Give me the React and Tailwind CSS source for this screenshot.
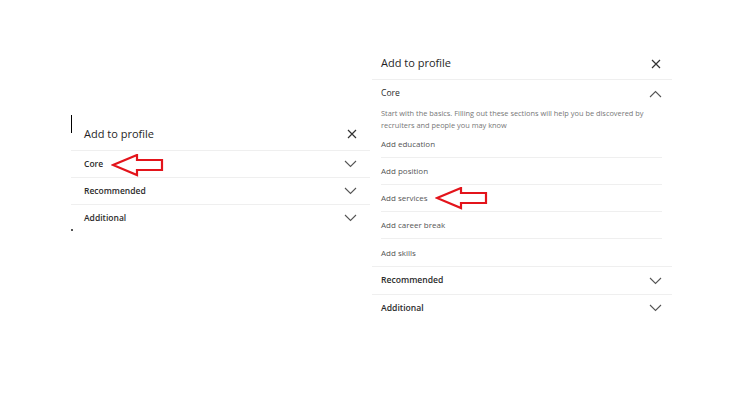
import React from 'react';

const FONT = { fontFamily: '"Open Sans", "Liberation Sans", sans-serif' };

const Chevron = ({ up = false }) => (
  <svg width="13" height="8" viewBox="0 0 13 8" className="shrink-0">
    <polyline
      points={up ? '1,7 6.5,1.5 12,7' : '1,1 6.5,6.5 12,1'}
      fill="none"
      stroke="#555"
      strokeWidth="1.1"
    />
  </svg>
);

const Close = () => (
  <svg width="10" height="10" viewBox="0 0 10 10" className="shrink-0">
    <path d="M1 1 L9 9 M9 1 L1 9" stroke="#333" strokeWidth="1.2" fill="none" />
  </svg>
);

const Arrow = ({ className }) => (
  <svg width="54" height="24" viewBox="0 0 54 24" className={className}>
    <polygon
      points="2,11 26,1 26,6 51,6 51,16 26,16 26,21"
      fill="none"
      stroke="#e3141b"
      strokeWidth="2.2"
      strokeLinejoin="miter"
    />
  </svg>
);

const SectionRow = ({ label, pad }) => (
  <div className={`h-[27px] flex items-center justify-between border-t border-[#efefef] ${pad}`}>
    <span className="text-[8.5px] font-semibold text-[#2b2b2b]">{label}</span>
    <Chevron />
  </div>
);

const items = ['Add education', 'Add position', 'Add services', 'Add career break', 'Add skills'];

export default function App() {
  return (
    <div className="relative w-[744px] h-[396px] bg-white flex items-start overflow-hidden" style={FONT}>
      {/* collapsed panel */}
      <div className="relative ml-[71px] mt-[115px] w-[299px]">
        <div className="absolute left-0 top-0 w-px h-[18px] bg-black" />
        <div className="h-[35px] flex items-center justify-between pl-[13px] pr-[13px] pt-[3px]">
          <span className="text-[11px] font-medium text-[#1f1f1f]">Add to profile</span>
          <Close />
        </div>
        <SectionRow label="Core" pad="pl-[13px] pr-[13px]" />
        <SectionRow label="Recommended" pad="pl-[13px] pr-[13px]" />
        <SectionRow label="Additional" pad="pl-[13px] pr-[13px]" />
        <div className="w-[2px] h-[2px] bg-[#555] mt-[-2px]" />
      </div>

      {/* expanded panel */}
      <div className="ml-[2px] mt-[46px] w-[300px]">
        <div className="h-[34px] flex items-center justify-between pl-[9px] pr-[11px] pt-[2px] border-b border-[#efefef]">
          <span className="text-[11px] font-medium text-[#1f1f1f]">Add to profile</span>
          <Close />
        </div>
        <div className="h-[27px] flex items-center justify-between pl-[9px] pr-[10px]">
          <span className="text-[8.6px] font-medium text-[#2b2b2b]">Core</span>
          <Chevron up />
        </div>
        <p className="pl-[9px] pr-[10px] text-[7.4px] leading-[12px] text-[#777]">
          Start with the basics. Filling out these sections will help you be discovered by
          <br />
          recruiters and people you may know
        </p>
        <div className="pl-[9px] pr-[10px]">
          {items.map((item, i) => (
            <div
              key={item}
              className={`h-[27px] flex items-center text-[8px] text-[#555] ${i < items.length - 1 ? 'border-b border-[#efefef]' : ''}`}
            >
              {item}
            </div>
          ))}
        </div>
        <div className="h-[28px] flex items-center justify-between pl-[9px] pr-[10px] border-t border-[#efefef]">
          <span className="text-[8.6px] font-semibold text-[#2b2b2b]">Recommended</span>
          <Chevron />
        </div>
        <div className="h-[27px] flex items-center justify-between pl-[9px] pr-[10px] border-t border-[#efefef]">
          <span className="text-[8.6px] font-semibold text-[#2b2b2b]">Additional</span>
          <Chevron />
        </div>
      </div>

      <Arrow className="absolute left-[111px] top-[154px]" />
      <Arrow className="absolute left-[435px] top-[187px]" />
    </div>
  );
}
